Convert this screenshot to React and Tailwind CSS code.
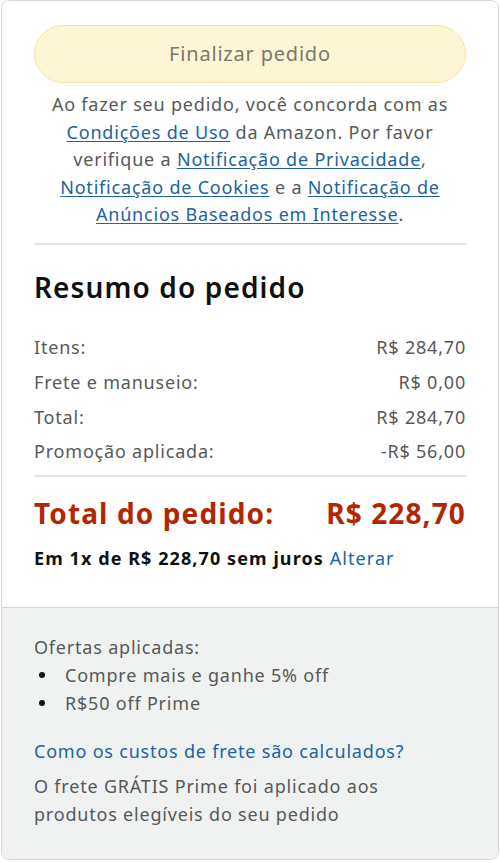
import React from "react";

function Row({ label, value }) {
  return (
    <div className="flex justify-between h-[34.7px] items-center">
      <span>{label}</span>
      <span>{value}</span>
    </div>
  );
}

function A({ children }) {
  return <a className="text-[#2162a1] underline underline-offset-2">{children}</a>;
}

function Bullet({ children }) {
  return (
    <li className="flex items-center">
      <span className="w-[31px] flex pl-[5px]">
        <span className="w-[6px] h-[6px] rounded-full bg-[#0f1111]" />
      </span>
      <span>{children}</span>
    </li>
  );
}

export default function App() {
  return (
    <div className="w-[500px] h-[863px] bg-white font-['Noto_Sans',sans-serif] tracking-[0.05em]">
      <div className="ml-px w-[498px] h-[860px] border border-[#d5d9d9] rounded-lg overflow-hidden flex flex-col">
        <div className="px-8 pt-6 bg-white">
          <button className="w-full h-[58px] rounded-full bg-[#fdf6d4] border border-[#f7e3a0] text-[20px] tracking-[0.04em] text-[#7a786a]">
            Finalizar pedido
          </button>
          <p className="mt-[8px] text-center text-[18px] leading-[27.5px] text-[#565959]">
            Ao fazer seu pedido, você concorda com as <A>Condições de Uso</A> da Amazon. Por favor verifique a{" "}
            <A>Notificação de Privacidade</A>, <A>Notificação de Cookies</A> e a{" "}
            <A>Notificação de Anúncios Baseados em Interesse</A>.
          </p>
          <div className="mt-[14px] border-t-2 border-[#e3e6e6]" />
          <h2 className="mt-[25px] text-[28px] tracking-[0.04em] font-semibold text-[#0f1111] leading-[34px]">
            Resumo do pedido
          </h2>
          <div className="mt-[27px] text-[18px] text-[#565959]">
            <Row label="Itens:" value="R$ 284,70" />
            <Row label="Frete e manuseio:" value="R$ 0,00" />
            <Row label="Total:" value="R$ 284,70" />
            <Row label="Promoção aplicada:" value="-R$ 56,00" />
          </div>
          <div className="mt-[6px] border-t-2 border-[#e3e6e6]" />
          <div className="mt-[17px] flex justify-between text-[28px] tracking-[0.04em] font-bold text-[#b12704] leading-[38px]">
            <span>Total do pedido:</span>
            <span>R$ 228,70</span>
          </div>
          <p className="mt-[14px] text-[18px] tracking-[0.06em] text-[#0f1111] leading-[24px]">
            <span className="font-bold">Em 1x de R$ 228,70 sem juros</span>{" "}
            <span className="text-[#2162a1]">Alterar</span>
          </p>
          <div className="h-[37px]" />
        </div>
        <div className="flex-1 bg-[#f0f2f2] border-t border-[#d5d9d9] px-8 pt-[25px] text-[18px] text-[#565959] leading-[28px]">
          <p>Ofertas aplicadas:</p>
          <ul>
            <Bullet>Compre mais e ganhe 5% off</Bullet>
            <Bullet>R$50 off Prime</Bullet>
          </ul>
          <p className="mt-[20px] text-[#2162a1]">Como os custos de frete são calculados?</p>
          <p className="mt-[7px] pr-[60px]">O frete GRÁTIS Prime foi aplicado aos produtos elegíveis do seu pedido</p>
        </div>
      </div>
    </div>
  );
}
